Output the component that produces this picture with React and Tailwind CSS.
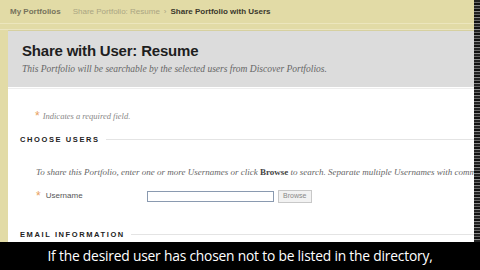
export default function App() {
  return (
    <div className="relative w-[480px] h-[270px] overflow-hidden bg-[#e2dba6]" style={{ fontFamily: '"Liberation Sans", Arial, sans-serif' }}>
      <div className="flex h-[270px]">
        <div className="flex-1 flex flex-col min-w-0">
          {/* breadcrumb */}
          <div className="h-[24px] flex items-center pl-[10px] text-[8px] border-b border-[#ece6bd]">
            <span className="font-bold text-[#77735c]">My Portfolios</span>
            <span className="ml-[12px] text-[#aaa583]">Share Portfolio: Resume</span>
            <span className="ml-[4px] text-[#aaa583]">›</span>
            <span className="ml-[4px] font-bold text-[#3a382c]">Share Portfolio with Users</span>
          </div>
          <div className="h-[6px] border-b border-[#ebe5c0]" />
          {/* panel */}
          <div className="ml-[8px] flex-1 flex flex-col bg-white overflow-hidden">
            <div className="h-[57px] bg-[#dcdcdc] pl-[14px] pt-[11px] border-t border-[#d6d0a0]">
              <div className="text-[15px] leading-[18px] font-bold text-[#1e1e1e] tracking-[-0.2px]">Share with User: Resume</div>
              <div className="mt-[2px] text-[9.5px] italic text-[#666] whitespace-nowrap" style={{ fontFamily: '"Liberation Serif", serif' }}>
                This Portfolio will be searchable by the selected users from Discover Portfolios.
              </div>
            </div>
            <div className="h-px bg-[#eeeeee] mt-[1px]" />
            <div className="pl-[27px] pt-[21px] flex items-center text-[8.5px] italic text-[#888]" style={{ fontFamily: '"Liberation Serif", serif' }}>
              <span className="not-italic text-[12px] leading-[10px] text-[#e8a060] mr-[3px]" style={{ fontFamily: '"Liberation Sans", sans-serif' }}>*</span>
              <span>Indicates a required field.</span>
            </div>
            <div className="mt-[11px] pl-[12px] flex items-center">
              <span className="text-[7.5px] font-bold tracking-[1.6px] text-[#222]">CHOOSE USERS</span>
              <div className="flex-1 h-px bg-[#e4e4e4] ml-[6px]" />
            </div>
            <div className="mt-[21px] pl-[28px] text-[9px] italic text-[#666] whitespace-nowrap" style={{ fontFamily: '"Liberation Serif", serif' }}>
              To share this Portfolio, enter one or more Usernames or click <span className="font-bold not-italic text-[#444]">Browse</span> to search. Separate multiple Usernames with commas.
            </div>
            <div className="mt-[10px] pl-[28px] flex items-center">
              <span className="text-[12px] leading-[10px] text-[#e8a060] mr-[5px]">*</span>
              <span className="text-[8px] text-[#555] w-[101px]">Username</span>
              <div className="w-[127px] h-[11px] border border-[#8a9ab0] bg-white" />
              <div className="ml-[4px] w-[34px] h-[13px] border border-[#c8c8c8] bg-[#f2f2f2] text-[7px] text-[#888] flex items-center justify-center">Browse</div>
            </div>
            <div className="mt-[26px] pl-[12px] flex items-center">
              <span className="text-[7.5px] font-bold tracking-[1.6px] text-[#222]">EMAIL INFORMATION</span>
              <div className="flex-1 h-px bg-[#e4e4e4] ml-[6px]" />
            </div>
          </div>
        </div>
        <div className="w-[6px] bg-[linear-gradient(#222_0_2px,#666_2px_3px,#111_3px_5px,#888_5px_6px)] bg-[length:6px_6px]" />
      </div>
      <div className="absolute left-0 right-0 bottom-0 h-[28px] bg-black flex items-center justify-center">
        <span className="text-white text-[13.8px] tracking-[-0.2px]" style={{ fontFamily: '"Open Sans", sans-serif' }}>
          If the desired user has chosen not to be listed in the directory,
        </span>
      </div>
    </div>
  );
}
